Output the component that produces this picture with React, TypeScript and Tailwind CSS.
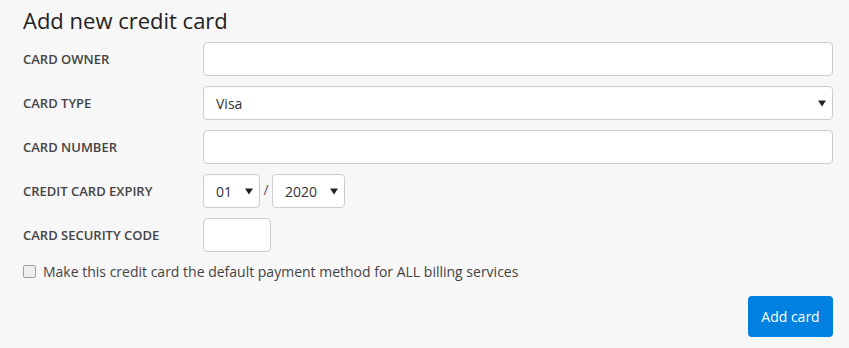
import { ReactNode } from 'react'

/* ── Add credit card form ─────────────────── */

function Caret() {
  return (
    <svg width="8" height="7" viewBox="0 0 8 7" className="shrink-0">
      <path d="M0 0.5h8L4 6.5z" fill="#222" />
    </svg>
  )
}

function Row({ label, children }: { label: string; children: ReactNode }) {
  return (
    <div className="flex items-center h-[34px] mb-[10px]">
      <label className="w-[180px] shrink-0 pt-[1px] text-[13px] font-semibold uppercase text-[#444]">
        {label}
      </label>
      {children}
    </div>
  )
}

function Select({ value, className }: { value: string; className: string }) {
  return (
    <div
      className={`h-[34px] rounded-[4px] border border-[#ccc] bg-white flex items-center justify-between text-[14px] text-[#333] ${className}`}
    >
      <span>{value}</span>
      <Caret />
    </div>
  )
}

export default function App() {
  return (
    <div
      className="w-[849px] h-[348px] bg-[#f7f7f7] pl-[23px] pr-[16px] pt-[4px]"
      style={{ fontFamily: '"Open Sans", "Noto Sans", sans-serif' }}
    >
      <h1 className="text-[22px] leading-[32px] text-[#222] mb-[6px]">Add new credit card</h1>

      <Row label="Card owner">
        <input className="w-[630px] h-[34px] rounded-[4px] border border-[#ccc] bg-white" />
      </Row>
      <Row label="Card type">
        <Select value="Visa" className="w-[630px] pl-[12px] pr-[6px]" />
      </Row>
      <Row label="Card number">
        <input className="w-[630px] h-[34px] rounded-[4px] border border-[#ccc] bg-white" />
      </Row>
      <Row label="Credit card expiry">
        <Select value="01" className="w-[57px] pl-[12px] pr-[6px]" />
        <span className="w-[12px] text-center text-[14px] text-[#555] -mt-[4px]">/</span>
        <Select value="2020" className="w-[73px] pl-[12px] pr-[6px]" />
      </Row>
      <Row label="Card security code">
        <input className="w-[68px] h-[34px] rounded-[4px] border border-[#ccc] bg-white" />
      </Row>

      <div className="flex items-center h-[20px] -mt-[1px]">
        <span className="w-[13px] h-[13px] rounded-[2px] border border-[#a0a0a0] bg-[#efefef] mr-[7px]" />
        <span className="text-[14px] text-[#444]">
          Make this credit card the default payment method for ALL billing services
        </span>
      </div>

      <div className="flex justify-end mt-[15px]">
        <button className="w-[85px] h-[41px] rounded-[4px] bg-[#0080e0] text-white text-[14px]">
          Add card
        </button>
      </div>
    </div>
  )
}
